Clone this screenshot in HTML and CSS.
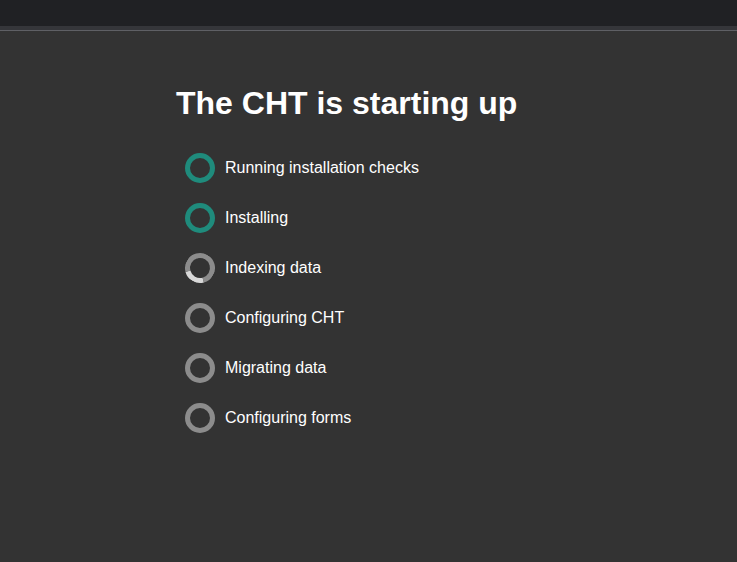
FILE: index.html
```html
<!DOCTYPE html>
<html>
<head>
<meta charset="utf-8">
<link rel="stylesheet" href="styles.css">
</head>
<body>
<div class="topbar"></div>
<div class="strip"></div>
<main class="content">
  <h1 class="title">The CHT is starting up</h1>
  <ul class="steps">
    <li class="step"><span class="ring done"></span><span class="label">Running installation checks</span></li>
    <li class="step"><span class="ring done"></span><span class="label">Installing</span></li>
    <li class="step"><span class="ring active"></span><span class="label">Indexing data</span></li>
    <li class="step"><span class="ring"></span><span class="label">Configuring CHT</span></li>
    <li class="step"><span class="ring"></span><span class="label">Migrating data</span></li>
    <li class="step"><span class="ring"></span><span class="label">Configuring forms</span></li>
  </ul>
</main>
</body>
</html>
```
FILE: styles.css
```css
html, body {
  margin: 0;
  padding: 0;
  background: #333333;
  height: 100%;
  font-family: "Liberation Sans", Arial, sans-serif;
  color: #ffffff;
}
.topbar {
  height: 26px;
  background: #202124;
}
.strip {
  height: 4px;
  background: #35363a;
  border-bottom: 1px solid #5f6065;
}
.content {
  padding-left: 176px;
  padding-top: 54px;
}
.title {
  margin: 0;
  font-size: 32px;
  font-weight: bold;
  line-height: 36px;
}
.steps {
  list-style: none;
  margin: 22px 0 0 9px;
  padding: 0;
}
.step {
  display: flex;
  align-items: center;
  height: 50px;
  gap: 10px;
}
.ring {
  box-sizing: border-box;
  width: 30px;
  height: 30px;
  border-radius: 50%;
  border: 5px solid #8c8c8c;
  flex: none;
}
.ring.done {
  border-color: #1f8b7c;
}
.ring.active {
  border-color: #8c8c8c;
  border-bottom-color: #d8d8d8;
  transform: rotate(30deg);
}
.label {
  font-size: 16px;
}
```
